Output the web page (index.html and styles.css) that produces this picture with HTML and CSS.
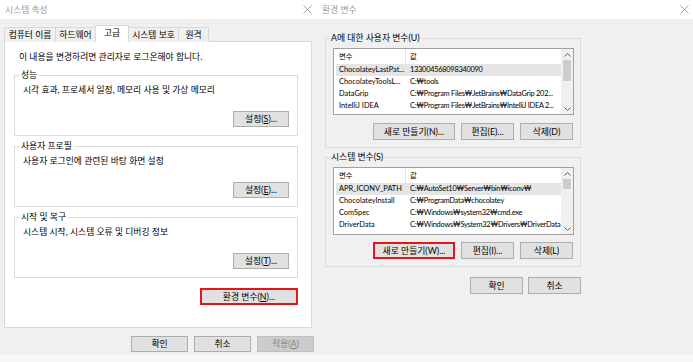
FILE: index.html
```html
<!DOCTYPE html>
<html lang="ko">
<head>
    <meta charset="UTF-8">
    <title>시스템 속성 / 환경 변수</title>
    <link rel="stylesheet" href="styles.css">
</head>
<body>
    <div class="screen">
        <!-- 시스템 속성 -->
        <div class="win win-sys">
            <div class="titlebar">
                <span class="title">시스템 속성</span>
                <svg class="close" viewBox="0 0 9 9"><path d="M0.5 0.5 L8.5 8.5 M8.5 0.5 L0.5 8.5" stroke="#a3a3a3" stroke-width="1" fill="none"/></svg>
            </div>
            <div class="sys-body">
                <div class="tabs">
                    <span class="tab t1">컴퓨터 이름</span>
                    <span class="tab t2">하드웨어</span>
                    <span class="tab active">고급</span>
                    <span class="tab t4">시스템 보호</span>
                    <span class="tab t5">원격</span>
                </div>
                <div class="panel">
                    <p class="note">이 내용을 변경하려면 관리자로 로그온해야 합니다.</p>

                    <fieldset class="group first">
                        <legend>성능</legend>
                        <p>시각 효과, 프로세서 일정, 메모리 사용 및 가상 메모리</p>
                        <div class="actions"><button class="btn btn-set">설정(<u>S</u>)...</button></div>
                    </fieldset>

                    <fieldset class="group">
                        <legend>사용자 프로필</legend>
                        <p>사용자 로그인에 관련된 바탕 화면 설정</p>
                        <div class="actions"><button class="btn btn-set">설정(<u>E</u>)...</button></div>
                    </fieldset>

                    <fieldset class="group">
                        <legend>시작 및 복구</legend>
                        <p>시스템 시작, 시스템 오류 및 디버깅 정보</p>
                        <div class="actions"><button class="btn btn-set">설정(<u>T</u>)...</button></div>
                    </fieldset>

                    <div class="env-row">
                        <button class="btn btn-env marked">환경 변수(<u>N</u>)...</button>
                    </div>
                </div>
                <div class="dialog-buttons">
                    <button class="btn btn-dlg">확인</button>
                    <button class="btn btn-dlg">취소</button>
                    <button class="btn btn-dlg disabled">적용(<u>A</u>)</button>
                </div>
            </div>
        </div>

        <!-- 환경 변수 -->
        <div class="win win-env">
            <div class="titlebar">
                <span class="title">환경 변수</span>
                <svg class="close" viewBox="0 0 9 9"><path d="M0.5 0.5 L8.5 8.5 M8.5 0.5 L0.5 8.5" stroke="#a3a3a3" stroke-width="1" fill="none"/></svg>
            </div>
            <div class="env-body">
                <fieldset class="vgroup">
                    <legend>A에 대한 사용자 변수(U)</legend>
                    <div class="list user-list">
                        <div class="cols">
                            <div class="row head"><span class="cell name">변수</span><span class="cell val">값</span></div>
                            <div class="row sel"><span class="cell name">ChocolateyLastPat...</span><span class="cell val">133004568098340090</span></div>
                            <div class="row"><span class="cell name">ChocolateyToolsL...</span><span class="cell val">C:₩tools</span></div>
                            <div class="row"><span class="cell name">DataGrip</span><span class="cell val">C:₩Program Files₩JetBrains₩DataGrip 202...</span></div>
                            <div class="row"><span class="cell name">IntelliJ IDEA</span><span class="cell val">C:₩Program Files₩JetBrains₩IntelliJ IDEA 2...</span></div>
                        </div>
                        <div class="vscroll">
                            <div class="arrow"><svg viewBox="0 0 7 4"><path d="M0.5 3.5 L3.5 0.5 L6.5 3.5" stroke="#606060" fill="none"/></svg></div>
                            <div class="track"><div class="thumb user-thumb"></div></div>
                            <div class="arrow"><svg viewBox="0 0 7 4"><path d="M0.5 0.5 L3.5 3.5 L6.5 0.5" stroke="#606060" fill="none"/></svg></div>
                        </div>
                    </div>
                    <div class="list-buttons">
                        <button class="btn btn-new">새로 만들기(N)...</button>
                        <button class="btn btn-small">편집(E)...</button>
                        <button class="btn btn-small">삭제(D)</button>
                    </div>
                </fieldset>

                <fieldset class="vgroup second">
                    <legend>시스템 변수(S)</legend>
                    <div class="list sys-list">
                        <div class="cols">
                            <div class="row head"><span class="cell name">변수</span><span class="cell val">값</span></div>
                            <div class="row sel"><span class="cell name">APR_ICONV_PATH</span><span class="cell val">C:₩AutoSet10₩Server₩bin₩iconv₩</span></div>
                            <div class="row"><span class="cell name">ChocolateyInstall</span><span class="cell val">C:₩ProgramData₩chocolatey</span></div>
                            <div class="row"><span class="cell name">ComSpec</span><span class="cell val">C:₩Windows₩system32₩cmd.exe</span></div>
                            <div class="row"><span class="cell name">DriverData</span><span class="cell val">C:₩Windows₩System32₩Drivers₩DriverData</span></div>
                        </div>
                        <div class="vscroll">
                            <div class="arrow"><svg viewBox="0 0 7 4"><path d="M0.5 3.5 L3.5 0.5 L6.5 3.5" stroke="#606060" fill="none"/></svg></div>
                            <div class="track"><div class="thumb sys-thumb"></div></div>
                            <div class="arrow"><svg viewBox="0 0 7 4"><path d="M0.5 0.5 L3.5 3.5 L6.5 0.5" stroke="#606060" fill="none"/></svg></div>
                        </div>
                    </div>
                    <div class="list-buttons">
                        <button class="btn btn-new marked">새로 만들기(W)...</button>
                        <button class="btn btn-small">편집(I)...</button>
                        <button class="btn btn-small">삭제(L)</button>
                    </div>
                </fieldset>

                <div class="dialog-buttons env-dlg">
                    <button class="btn btn-ok">확인</button>
                    <button class="btn btn-ok">취소</button>
                </div>
            </div>
        </div>
    </div>
    <div class="strip"></div>
</body>
</html>
```

FILE: styles.css
```css
* {
    box-sizing: border-box;
}
body {
    margin: 0;
    width: 693px;
    height: 362px;
    overflow: hidden;
    background: #f0f0f0;
    font-family: "Lato", "Roboto", "DejaVu Sans", "Noto Sans CJK KR", sans-serif;
    font-size: 8.8px;
    color: #000;
}
.screen {
    display: flex;
    height: 355px;
}
.strip {
    height: 7px;
    background: #f7f7f7;
}
.win-sys {
    width: 318px;
}
.win-env {
    width: 375px;
}
.titlebar {
    height: 19px;
    background: #fff;
    display: flex;
    align-items: center;
    justify-content: space-between;
    padding: 0 6px 0 5px;
    color: #9a9a9a;
}
.win-env .titlebar {
    padding: 0 4px 0 4px;
}
.close {
    width: 9px;
    height: 9px;
}

/* buttons */
.btn {
    height: 16px;
    padding: 0;
    border: 1px solid #adadad;
    background: #e1e1e1;
    font: inherit;
    line-height: 14px;
    color: #000;
    white-space: nowrap;
}
.btn.marked {
    border: 2px solid #e8141c;
}
.btn.disabled {
    background: #cccccc;
    border-color: #bfbfbf;
    color: #838383;
}

/* 시스템 속성 */
.sys-body {
    padding: 6px 4px 0 4px;
}
.tabs {
    display: flex;
    align-items: flex-end;
    height: 17px;
    margin-bottom: -1px;
}
.tab {
    height: 15px;
    border: 1px solid #d9d9d9;
    border-bottom: none;
    border-right: none;
    background: #f0f0f0;
    text-align: center;
    line-height: 13px;
    white-space: nowrap;
}
.t1 { width: 51px; }
.t2 { width: 40px; }
.t4 { width: 49px; border-left: none; }
.t5 { width: 31px; border-right: 1px solid #d9d9d9; }
.tab.active {
    position: relative;
    z-index: 1;
    width: 34px;
    height: 17px;
    background: #fff;
    border-right: 1px solid #d9d9d9;
    line-height: 14px;
}
.panel {
    background: #fff;
    border: 1px solid #d9d9d9;
    height: 287px;
    margin-right: 2px;
    padding: 9px 13px 0 9px;
}
.note {
    margin: 0 0 0 5px;
    line-height: 12px;
}
.group {
    margin: 4px 0 0;
    padding: 0 8px 8px 0;
    border: 1px solid #dcdcdc;
    min-width: 0;
}
.group.first {
    margin-top: 6px;
}
.group legend,
.vgroup legend {
    padding: 0 2px;
    margin-left: 4px;
    line-height: 12px;
}
.group p {
    margin: 3px 0 0 8px;
    line-height: 12px;
}
.actions {
    display: flex;
    justify-content: flex-end;
    margin-top: 15px;
}
.btn-set {
    width: 56px;
}
.env-row {
    display: flex;
    justify-content: flex-end;
    margin-top: 10px;
}
.btn-env {
    width: 98px;
    height: 17px;
}
.dialog-buttons {
    display: flex;
    justify-content: flex-end;
    gap: 6px;
    margin-top: 8px;
}
.btn-dlg {
    width: 57px;
}

/* 환경 변수 */
.env-body {
    width: 263px;
    padding: 13px 0 0 7px;
}
.vgroup {
    margin: 0;
    padding: 0 6px 7px 3px;
    border: 1px solid #dcdcdc;
    min-width: 0;
}
.vgroup legend {
    margin-left: 0;
}
.vgroup.second {
    margin-top: 3px;
}
.list {
    display: flex;
    width: 241px;
    margin: 4px 0 0 4px;
    border: 1px solid #a0a0a0;
    background: #fff;
    overflow: hidden;
    font-size: 7.4px;
}
.user-list {
    height: 67px;
}
.sys-list {
    height: 68px;
}
.cols {
    flex: 1;
    min-width: 0;
    padding-left: 2px;
}
.row {
    display: flex;
    height: 12px;
    line-height: 12px;
    white-space: nowrap;
}
.row.head {
    height: 15px;
    line-height: 15px;
}
.row.sel {
    background: #e5e5e5;
}
.cell {
    overflow: hidden;
}
.cell.name {
    width: 70px;
    padding-left: 3px;
    flex-shrink: 0;
}
.head .cell.name {
    border-right: 1px solid #e5e5e5;
}
.cell.val {
    flex: 1;
    padding-left: 4px;
    letter-spacing: -0.25px;
}
.vscroll {
    width: 12px;
    flex-shrink: 0;
    display: flex;
    flex-direction: column;
    background: #f0f0f0;
}
.arrow {
    height: 11px;
    display: flex;
    align-items: center;
    justify-content: center;
}
.arrow svg {
    width: 7px;
    height: 4px;
}
.track {
    flex: 1;
}
.thumb {
    margin: 0 2px;
    background: #cdcdcd;
}
.user-thumb {
    height: 21px;
}
.sys-thumb {
    height: 10px;
}
.list-buttons {
    display: flex;
    justify-content: flex-end;
    gap: 6px;
    margin: 8px 1px 0 0;
}
.vgroup.second .list-buttons {
    margin-top: 7px;
}
.list-buttons .btn {
    height: 17px;
}
.btn-new {
    width: 82px;
}
.btn-small {
    width: 53px;
}
.env-dlg {
    gap: 5px;
    margin-top: 10px;
}
.btn-ok {
    width: 53px;
    height: 17px;
}
```
